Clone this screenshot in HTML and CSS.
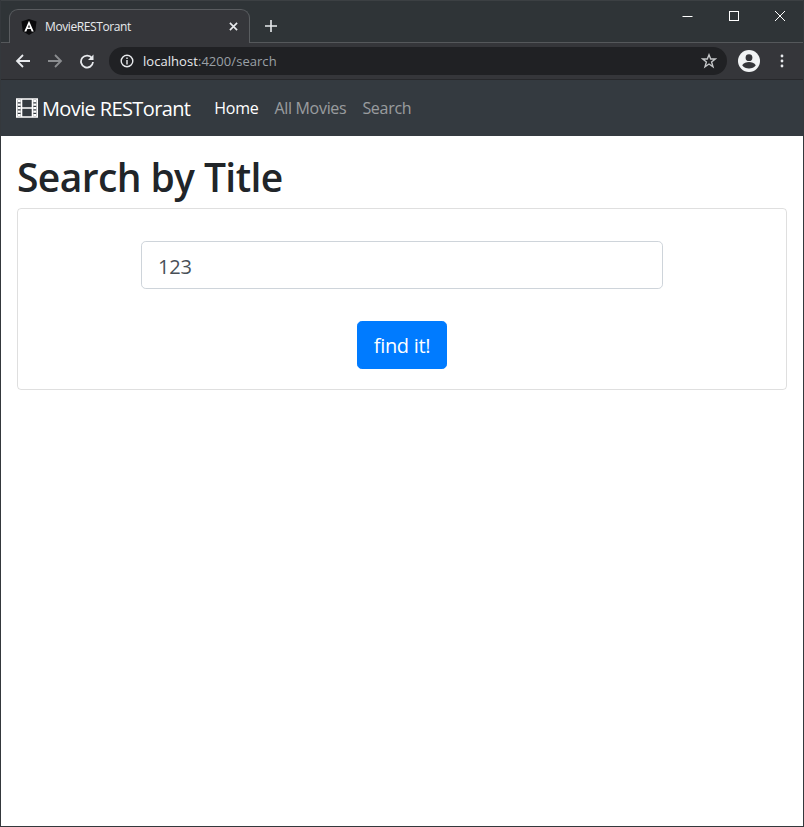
FILE: index.html
```html
<!DOCTYPE html>
<html lang="en">
<head>
<meta charset="utf-8">
<title>MovieRESTorant</title>
<link rel="stylesheet" href="styles.css">
</head>
<body>
<div class="window">
  <div class="titlebar">
    <div class="tab">
      <svg class="favicon" viewBox="0 0 16 16"><path fill="#0a0a0c" d="M8 0 15.500 2.600 14.300 12.200 8 16 1.700 12.200 .5 2.600Z"/><path fill="#fff" d="M8 1.800 3.300 12.500H5.300L6.300 10H9.700L10.700 12.500H12.700ZM7 8.400 8 5.800 9 8.400Z"/></svg>
      <span class="tab-title">MovieRESTorant</span>
      <svg class="tab-close" viewBox="0 0 10 10"><path d="M1 1 9 9M9 1 1 9" stroke="#e8eaed" stroke-width="1.8" fill="none"/></svg>
    </div>
    <svg class="new-tab" viewBox="0 0 12 12"><path d="M6 0V12M0 6H12" stroke="#e8eaed" stroke-width="1.6" fill="none"/></svg>
    <div class="win-controls">
      <svg class="win-btn" viewBox="0 0 46 30"><path d="M17.500 15.500H27.500" stroke="#fff" fill="none"/></svg>
      <svg class="win-btn" viewBox="0 0 46 30"><rect x="18.500" y="10.500" width="9" height="9" stroke="#fff" fill="none"/></svg>
      <svg class="win-btn" viewBox="0 0 46 30"><path d="M18 10 28 20M28 10 18 20" stroke="#fff" fill="none"/></svg>
    </div>
  </div>
  <div class="toolbar">
    <svg class="nav-icon" viewBox="0 0 16 16"><path d="M15 8H2M8 2 2 8 8 14" stroke="#e8eaed" stroke-width="1.8" fill="none"/></svg>
    <svg class="nav-icon" viewBox="0 0 16 16"><path d="M1 8H14M8 2 14 8 8 14" stroke="#8b8d90" stroke-width="1.8" fill="none"/></svg>
    <svg class="nav-icon" viewBox="0 0 16 16"><path d="M13 5.200A6 6 0 1 0 14 9" stroke="#e8eaed" stroke-width="1.800" fill="none"/><path fill="#e8eaed" d="M14.500 1.500V7H9Z"/></svg>
    <div class="omnibox">
      <svg class="info" viewBox="0 0 14 14"><circle cx="7" cy="7" r="5.800" stroke="#e8eaed" stroke-width="1.400" fill="none"/><path d="M7 6V10.500M7 3.500V5" stroke="#e8eaed" stroke-width="1.400" fill="none"/></svg>
      <span class="url"><span class="host">localhost</span>:4200/search</span>
      <svg class="star" viewBox="0 0 16 16"><path d="M8 1.800 9.700 6H14.300L10.600 8.900 12 13.800 8 11 4 13.800 5.400 8.900 1.700 6H6.300Z" stroke="#c4c6c8" stroke-width="1.400" fill="none"/></svg>
    </div>
    <svg class="avatar" viewBox="0 0 22 22"><circle cx="11" cy="11" r="11" fill="#f1f3f4"/><circle cx="11" cy="7.700" r="3.400" fill="#35363a"/><path fill="#35363a" d="M4.200 15.200C5.500 12.800 8.500 12 11 12S16.500 12.800 17.800 15.200C16.200 17.300 13.800 18.500 11 18.500S5.800 17.300 4.200 15.200Z"/></svg>
    <svg class="menu" viewBox="0 0 4 14"><circle cx="2" cy="2" r="1.400" fill="#e8eaed"/><circle cx="2" cy="7" r="1.400" fill="#e8eaed"/><circle cx="2" cy="12" r="1.400" fill="#e8eaed"/></svg>
  </div>
  <nav class="navbar">
    <a class="brand">
      <svg class="film" viewBox="0 0 22 20"><path fill="none" stroke="#fff" stroke-width="1.600" d="M.800 1H21.200V19H.800ZM5.500 1V19M16.500 1V19M5.500 10H16.500"/><path stroke="#fff" stroke-width="3" stroke-dasharray="2.200 1.300" d="M3.200 2V18M18.800 2V18" fill="none"/></svg>
      <span class="brand-text">Movie RESTorant</span>
    </a>
    <a class="nav-link active">Home</a>
    <a class="nav-link">All Movies</a>
    <a class="nav-link">Search</a>
  </nav>
  <main class="content">
    <h1 class="heading">Search by Title</h1>
    <div class="card">
      <input class="field" type="text" value="123">
      <button class="btn">find it!</button>
    </div>
  </main>
</div>
</body>
</html>
```
FILE: styles.css
```css
* { box-sizing: border-box; }
html, body { margin: 0; height: 100%; }
body { background: #fff; font-family: "Open Sans", "Noto Sans", "Liberation Sans", sans-serif; overflow: hidden; }
.window { height: 827px; display: flex; flex-direction: column; border: 1px solid #34383c; border-top: 0; }
.titlebar { height: 43px; flex: none; background: #2f3437; display: flex; align-items: flex-end; padding-left: 8px; border-bottom: 1px solid #55585b; border-top: 1px solid #3c4043; position: relative; }
.tab { width: 241px; height: 34px; margin-bottom: -1px; background: #35363a; border: 1px solid #5a5d60; border-bottom: 0; border-radius: 9px 9px 0 0; display: flex; align-items: center; padding: 0 11px 0 11px; }
.favicon { width: 16px; height: 16px; flex: none; }
.tab-title { flex: 1; margin-left: 8px; font-size: 12px; color: #e8eaed; letter-spacing: -0.4px; white-space: nowrap; }
.tab-close { width: 9px; height: 9px; flex: none; }
.new-tab { width: 12px; height: 12px; margin: 0 0 10px 15px; flex: none; }
.win-controls { margin-left: auto; align-self: flex-start; display: flex; }
.win-btn { width: 46px; height: 30px; display: block; }
.toolbar { height: 37px; flex: none; background: #35363a; display: flex; align-items: center; padding: 0 14px; border-bottom: 1px solid #27282b; }
.nav-icon { width: 16px; height: 16px; flex: none; margin-right: 16px; }
.nav-icon:nth-child(3) { margin-right: 14px; }
.omnibox { width: 618px; height: 28px; background: #202124; border-radius: 14px; display: flex; align-items: center; padding: 0 10px 0 11px; flex: none; }
.info { width: 14px; height: 14px; flex: none; }
.url { margin-left: 9px; flex: 1; font-size: 13px; color: #9aa0a6; letter-spacing: 0.05px; }
.host { color: #e8eaed; }
.star { width: 16px; height: 16px; flex: none; }
.avatar { width: 22px; height: 22px; margin-left: 11px; flex: none; }
.menu { width: 4px; height: 14px; margin-left: 20px; flex: none; }
.navbar { height: 56px; flex: none; background: #343a40; display: flex; align-items: center; padding: 0 15px; }
.brand { display: flex; align-items: center; font-size: 20px; color: #fff; margin-right: 16px; white-space: nowrap; }
.brand-text { letter-spacing: -0.62px; }
.film { width: 22px; height: 20px; margin-right: 4px; flex: none; }
.nav-link { font-size: 16px; color: rgba(255,255,255,.5); padding: 0 8px; letter-spacing: -0.3px; }
.nav-link.active { color: #fff; }
.content { flex: 1; padding: 17px 16px 0; }
.heading { margin: 0 0 7px; font-size: 39px; font-weight: 600; line-height: 48px; color: #212529; letter-spacing: -0.6px; }
.card { border: 1px solid rgba(0,0,0,.125); border-radius: 4px; padding: 32px 20px 20px; display: flex; flex-direction: column; align-items: center; }
.field { width: 522px; height: 48px; padding: 10px 16px 8px; font: inherit; font-size: 20px; color: #495057; border: 1px solid #ced4da; border-radius: 4.800px; outline: 0; margin-bottom: 32px; letter-spacing: -0.2px; }
.btn { width: 90px; height: 48px; font: inherit; font-size: 20px; color: #fff; background: #007bff; border: 1px solid #007bff; border-radius: 4.800px; padding: 0; letter-spacing: -0.3px; }
```
